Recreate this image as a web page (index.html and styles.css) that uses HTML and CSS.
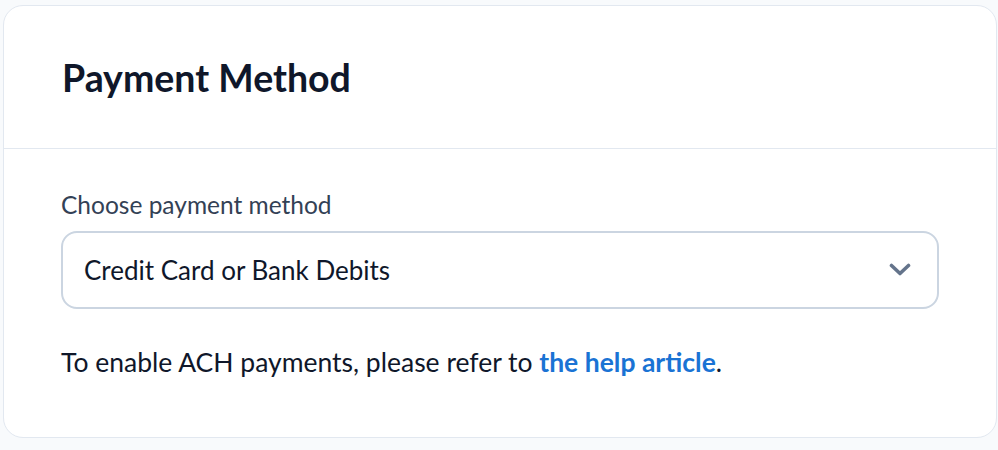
FILE: index.html
```html
<!DOCTYPE html>
<html lang="en">

<head>
  <meta charset="UTF-8">
  <meta name="viewport" content="width=device-width, initial-scale=1.0">
  <title>Payment Method</title>
  <link rel="stylesheet" href="styles.css">
</head>

<body>

  <!-- Payment Method Card -->
  <section class="card">
    <div class="card-header">
      <h2 class="card-title">Payment Method</h2>
    </div>
    <div class="card-body">
      <label class="field-label" for="payment-method">Choose payment method</label>
      <div class="select-wrap">
        <select class="select" id="payment-method">
          <option>Credit Card or Bank Debits</option>
        </select>
        <svg class="select-chevron" width="22" height="14" viewBox="0 0 22 14" aria-hidden="true">
          <path d="M2.5 2.5 L11 10.5 L19.5 2.5" fill="none" stroke="#64748b" stroke-width="3.6" stroke-linecap="round" stroke-linejoin="round" />
        </svg>
      </div>
      <p class="help-text">To enable ACH payments, please refer to <a class="help-link" href="#">the help article</a>.</p>
    </div>
  </section>

</body>

</html>
```

FILE: styles.css
```css
body {
  margin: 0;
  padding: 5px 1px 11px 3px;
  font-family: Lato, "Noto Sans", sans-serif;
  background-color: #f8fafc;
}

.card {
  background-color: #fff;
  border: 1px solid #e2e8f0;
  border-radius: 20px;
}

.card-header {
  height: 142px;
  padding: 0 58px;
  display: flex;
  align-items: center;
  border-bottom: 1px solid #e2e8f0;
}

.card-title {
  margin: 0;
  font-size: 37.5px;
  font-weight: 700;
  color: #0f172a;
}

.card-body {
  padding: 41px 57px 59px;
}

.field-label {
  display: block;
  margin-bottom: 11px;
  font-size: 24.5px;
  line-height: 30px;
  color: #334155;
}

.select-wrap {
  position: relative;
}

.select {
  display: block;
  width: 100%;
  height: 78px;
  padding: 0 60px 0 21px;
  font-family: inherit;
  font-size: 26px;
  color: #0f172a;
  background-color: #fff;
  border: 2px solid #cbd5e1;
  border-radius: 16px;
  appearance: none;
  -webkit-appearance: none;
}

.select-chevron {
  position: absolute;
  right: 28px;
  top: 32px;
  pointer-events: none;
}

.help-text {
  margin: 37px 0 0;
  font-size: 26.5px;
  line-height: 32px;
  color: #0f172a;
}

.help-link {
  color: #1a73d4;
  font-weight: 700;
  text-decoration: none;
}
```
